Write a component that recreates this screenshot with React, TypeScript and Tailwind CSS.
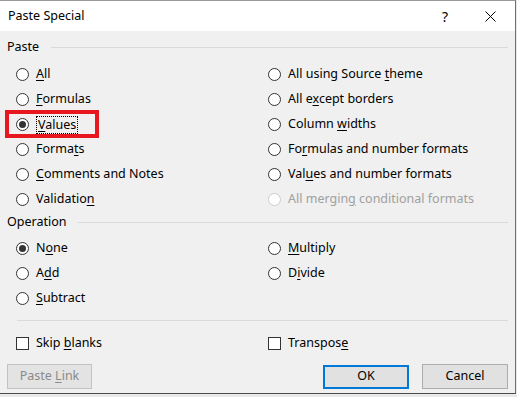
import React from 'react';

type Opt = { label: string; k: number; checked?: boolean; disabled?: boolean; focus?: boolean };

const Label = ({ text, k }: { text: string; k: number }) => (
  <span>
    {text.slice(0, k)}
    <span className="underline decoration-1 underline-offset-[2px]">{text[k]}</span>
    {text.slice(k + 1)}
  </span>
);

const Radio = ({ checked, disabled }: { checked?: boolean; disabled?: boolean }) => (
  <span
    className={`flex h-[13px] w-[13px] shrink-0 items-center justify-center rounded-full border bg-white ${
      disabled ? 'border-[#cccccc]' : 'border-[#333333]'
    }`}
  >
    {checked && <span className="h-[7px] w-[7px] rounded-full bg-[#333333]" />}
  </span>
);

const RadioRow = ({ o }: { o: Opt }) => (
  <div className={`relative flex h-[25px] items-center gap-[7px] ${o.disabled ? 'text-[#a0a0a0]' : 'text-black'}`}>
    <Radio checked={o.checked} disabled={o.disabled} />
    {o.focus ? (
      <span className="border border-dotted border-black px-px leading-[16px]">
        <Label text={o.label} k={o.k} />
      </span>
    ) : (
      <Label text={o.label} k={o.k} />
    )}
    {o.focus && (
      <span className="pointer-events-none absolute left-[-11px] top-[-2px] h-[28px] w-[94px] border-4 border-[#e8161e]" />
    )}
  </div>
);

const CheckRow = ({ label, k }: { label: string; k: number }) => (
  <div className="flex h-[25px] items-center gap-[7px]">
    <span className="h-[13px] w-[13px] shrink-0 border border-[#333333] bg-white" />
    <Label text={label} k={k} />
  </div>
);

const Header = ({ title }: { title: string }) => (
  <div className="flex h-[16px] items-center">
    <span className="leading-[16px]">{title}</span>
    <span className="ml-[12px] h-px flex-1 bg-[#dadada]" />
  </div>
);

const pasteLeft: Opt[] = [
  { label: 'All', k: 0 },
  { label: 'Formulas', k: 0 },
  { label: 'Values', k: 0, checked: true, focus: true },
  { label: 'Formats', k: 5 },
  { label: 'Comments and Notes', k: 0 },
  { label: 'Validation', k: 9 },
];

const pasteRight: Opt[] = [
  { label: 'All using Source theme', k: 17 },
  { label: 'All except borders', k: 5 },
  { label: 'Column widths', k: 7 },
  { label: 'Formulas and number formats', k: 2 },
  { label: 'Values and number formats', k: 3 },
  { label: 'All merging conditional formats', k: 10, disabled: true },
];

const opLeft: Opt[] = [
  { label: 'None', k: 1, checked: true },
  { label: 'Add', k: 1 },
  { label: 'Subtract', k: 0 },
];

const opRight: Opt[] = [
  { label: 'Multiply', k: 0 },
  { label: 'Divide', k: 1 },
];

export default function App() {
  return (
    <div className="h-[397px] w-[517px] overflow-hidden bg-[#e9e9e9] font-['Noto_Sans',sans-serif] text-[12.5px] text-black">
      <div className="flex h-[394px] w-[516px] flex-col border-t border-r border-b border-t-[#9a9a9a] border-r-[#6f6f6f] border-b-[#4a4a4a] bg-[#f0f0f0]">
        {/* Title bar */}
        <div className="flex h-[30px] shrink-0 items-center bg-white pl-[8px]">
          <span className="flex-1">Paste Special</span>
          <span className="w-[10px] text-center text-[14px]">?</span>
          <span className="ml-[34px] mr-[19px] flex h-[12px] w-[12px] items-center justify-center">
            <svg width="11" height="11" viewBox="0 0 11 11">
              <path d="M0.5 0.5 L10.5 10.5 M10.5 0.5 L0.5 10.5" stroke="#000" strokeWidth="1" />
            </svg>
          </span>
        </div>

        <div className="flex flex-col pl-[7px] pr-[7px]">
          <div className="mt-[8px]">
            <Header title="Paste" />
          </div>
          <div className="mt-[7px] grid grid-cols-[252px_1fr] pl-[9px]">
            <div className="flex flex-col">
              {pasteLeft.map((o) => (
                <RadioRow key={o.label} o={o} />
              ))}
            </div>
            <div className="flex flex-col">
              {pasteRight.map((o) => (
                <RadioRow key={o.label} o={o} />
              ))}
            </div>
          </div>

          <div className="mt-[2px]">
            <Header title="Operation" />
          </div>
          <div className="mt-[6px] grid grid-cols-[252px_1fr] pl-[9px]">
            <div className="flex flex-col">
              {opLeft.map((o) => (
                <RadioRow key={o.label} o={o} />
              ))}
            </div>
            <div className="flex flex-col">
              {opRight.map((o) => (
                <RadioRow key={o.label} o={o} />
              ))}
            </div>
          </div>

          <div className="ml-[10px] mt-[9px] h-px bg-[#dadada]" />

          <div className="mt-[10px] grid grid-cols-[252px_1fr] pl-[9px]">
            <CheckRow label="Skip blanks" k={5} />
            <CheckRow label="Transpose" k={8} />
          </div>

          <div className="mt-[8px] flex items-center">
            <button className="h-[25px] w-[85px] border border-[#c2c2c2] bg-[#e3e3e3] text-[#8a8a8a]">
              Paste <Label text="Link" k={0} />
            </button>
            <span className="flex-1" />
            <button className="h-[24px] w-[86px] border-2 border-[#0078d7] bg-[#e1e1e1]">OK</button>
            <button className="ml-[13px] h-[25px] w-[86px] border border-[#adadad] bg-[#e1e1e1]">Cancel</button>
          </div>
        </div>
      </div>
    </div>
  );
}
